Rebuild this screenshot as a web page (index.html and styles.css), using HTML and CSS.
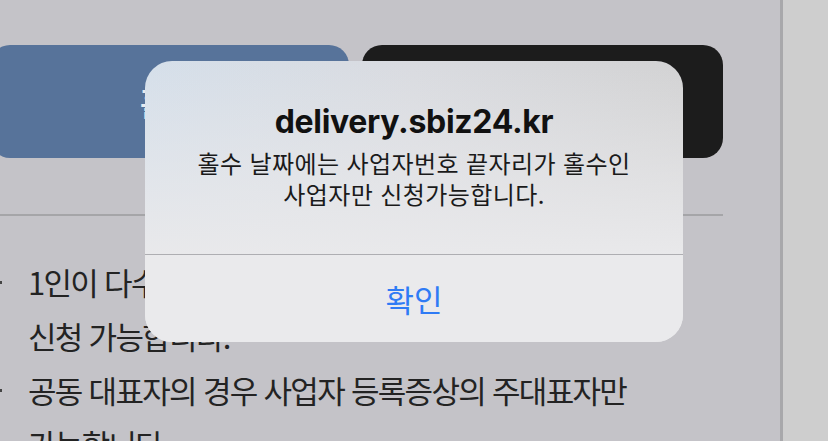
FILE: index.html
```html
<!DOCTYPE html>
<html lang="ko">
<head>
  <meta charset="UTF-8">
  <meta name="viewport" content="width=device-width, initial-scale=1.0">
  <title>delivery.sbiz24.kr</title>
  <link rel="stylesheet" href="styles.css">
</head>
<body>
  <div class="page">
    <div class="main">
      <div class="content">
        <div class="btn-row">
          <button class="btn btn-odd">홀수</button>
          <button class="btn btn-even">짝수</button>
        </div>
        <hr class="divider">
        <ul class="notes">
          <li>1인이 다수 사업자를 보유한 경우 모두<br>신청 가능합니다.</li>
          <li>공동 대표자의 경우 사업자 등록증상의 주대표자만<br>가능합니다.</li>
        </ul>
      </div>
    </div>
    <div class="side"></div>
  </div>

  <!-- alert -->
  <div class="alert">
    <div class="alert-body">
      <h1 class="alert-title">delivery.sbiz24.kr</h1>
      <p class="alert-msg">홀수 날짜에는 사업자번호 끝자리가 홀수인<br>사업자만 신청가능합니다.</p>
    </div>
    <button class="alert-btn">확인</button>
  </div>
</body>
</html>
```

FILE: styles.css
```css
body {
  margin: 0;
  background-color: #c4c3c8;
  font-family: "Noto Sans CJK KR", "Noto Sans", sans-serif;
  overflow: hidden;
}

.page {
  display: flex;
  height: 441px;
}

.main {
  width: 780px;
  flex-shrink: 0;
  border-right: 3px solid #a8a8ab;
  overflow: hidden;
}

.side {
  flex: 1;
  background-color: #cecece;
}

.content {
  margin-left: -10px;
  width: 733px;
  padding-top: 45px;
}

.btn-row {
  display: flex;
  gap: 13px;
}

.btn {
  height: 113px;
  border: none;
  border-radius: 20px;
  font-family: "Noto Sans CJK KR", sans-serif;
  font-size: 32px;
  font-weight: 700;
}

.btn-odd {
  width: 359px;
  background-color: #57739a;
  color: #e6eaf0;
}

.btn-even {
  flex: 1;
  background-color: #1c1c1c;
  color: #ffffff;
}

.divider {
  margin: 56px 0 0 10px;
  border: none;
  height: 2px;
  background-color: #a5a5a8;
}

.notes {
  list-style: none;
  margin: 39px 0 0;
  padding: 0 0 0 38px;
  font-size: 31px;
  line-height: 54px;
  letter-spacing: -1.7px;
  color: #232323;
}

.notes li {
  position: relative;
}

.notes li::before {
  content: "";
  position: absolute;
  left: -29px;
  top: 26px;
  width: 3px;
  height: 3px;
  background: #444;
}

/* alert */
.alert {
  position: absolute;
  left: 145px;
  top: 61px;
  width: 538px;
  height: 281px;
  border-radius: 27px;
  overflow: hidden;
  display: flex;
  flex-direction: column;
  background:
    linear-gradient(to bottom, rgba(233, 233, 235, 0) 0%, rgba(233, 233, 235, 0.6) 40%, #e9e9eb 70%),
    linear-gradient(to right, #d5dfea 0%, #d9dbe0 50%, #d2d2d3 100%);
}

.alert-body {
  padding: 43px 10px 0;
  height: 150px;
  text-align: center;
  border-bottom: 1px solid #aeaeb2;
}

.alert-title {
  margin: 0;
  font-family: Inter, "Noto Sans CJK KR", sans-serif;
  font-size: 32px;
  font-weight: 700;
  line-height: 36px;
  letter-spacing: -0.3px;
  color: #111;
}

.alert-msg {
  margin: 7px 0 0;
  font-size: 24px;
  line-height: 31px;
  letter-spacing: 0.4px;
  color: #1a1a1a;
}

.alert-btn {
  flex: 1;
  border: none;
  background: #eaeaec;
  font-family: "Noto Sans CJK KR", sans-serif;
  font-size: 31px;
  color: #2f7bf5;
  padding: 0;
}
```
